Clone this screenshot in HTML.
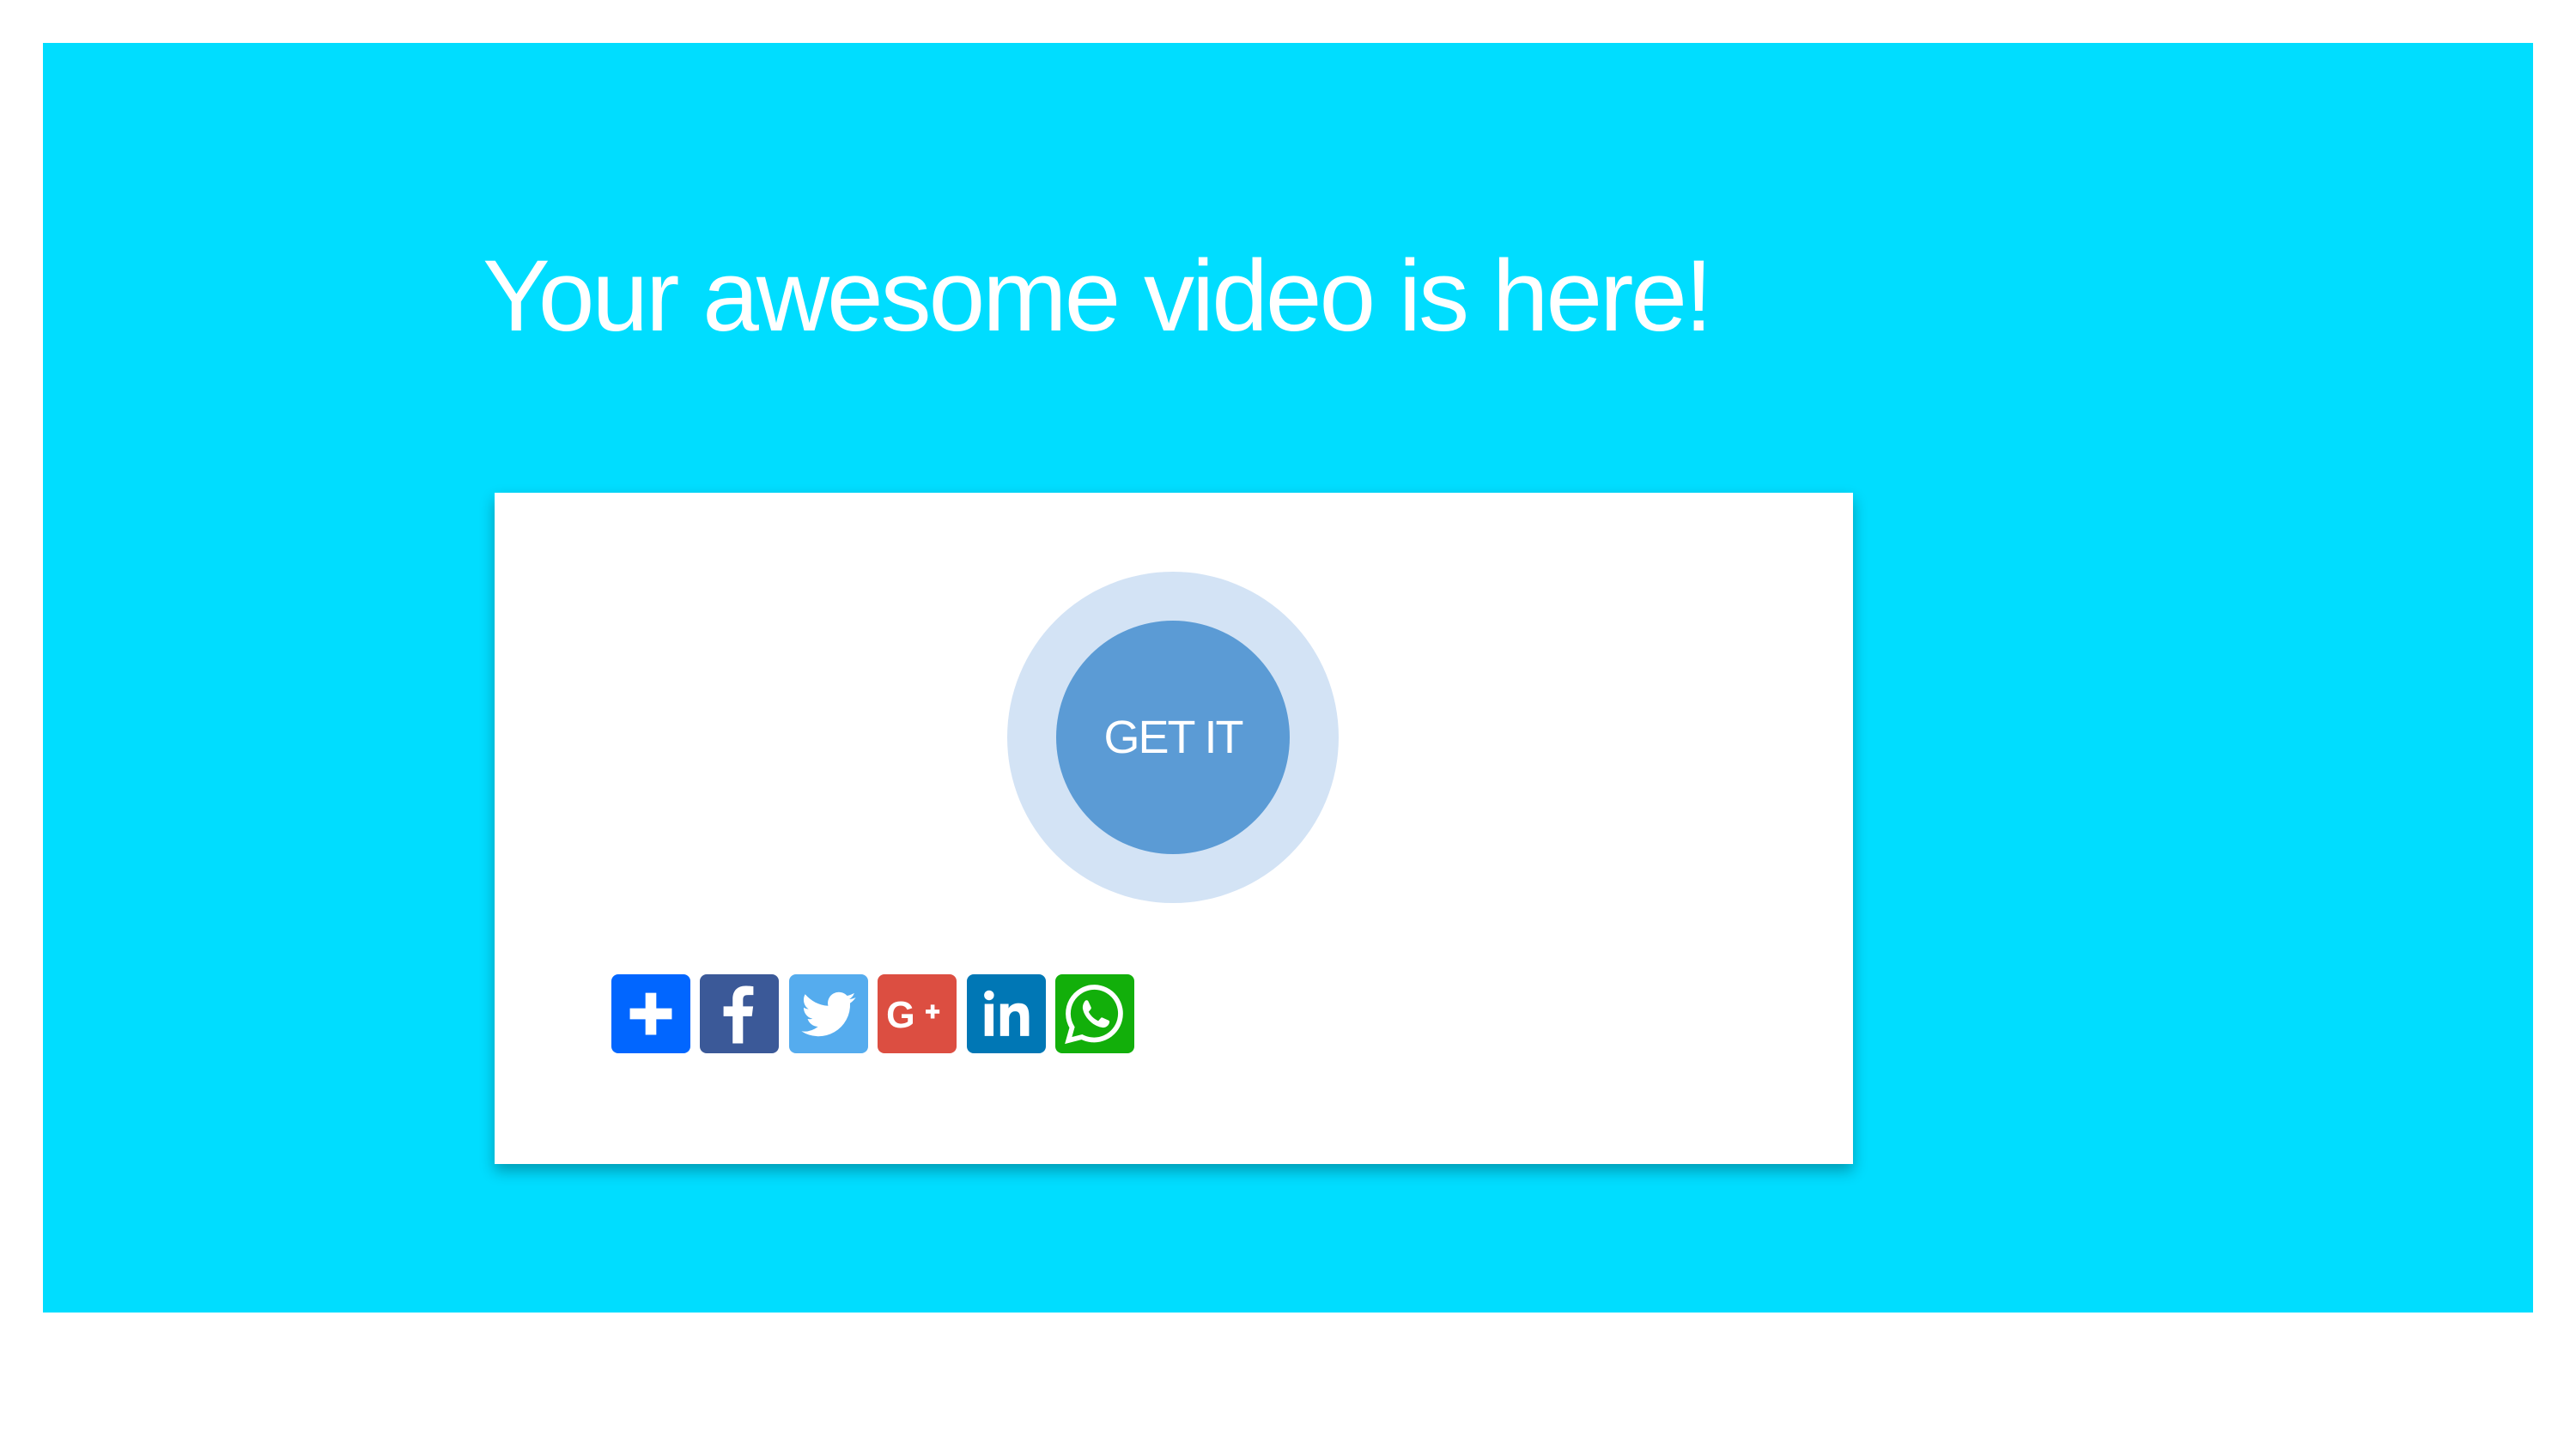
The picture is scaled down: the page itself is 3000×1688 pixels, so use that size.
<!DOCTYPE html>
<html><head><meta charset="utf-8"><style>
html,body{margin:0;padding:0;background:#fff;width:3000px;height:1688px;overflow:hidden}
.bg{position:absolute;left:50px;top:50px;width:2900px;height:1479px;background:#00DDFF}
h1{position:absolute;left:562px;top:286px;margin:0;font:300 118px/1 "Liberation Sans",sans-serif;color:#fff;letter-spacing:-3px;white-space:nowrap}
.card{position:absolute;left:576px;top:574px;width:1582px;height:782px;background:#fff;box-shadow:0 8px 16px rgba(0,0,0,.3)}
.outer{position:absolute;left:1173px;top:666px;width:386px;height:386px;border-radius:50%;background:#D3E3F5}
.inner{position:absolute;left:1230px;top:723px;width:272px;height:272px;border-radius:50%;background:#5B9BD5;color:#fff;font:400 54px/272px "Liberation Sans",sans-serif;text-align:center;letter-spacing:-2px}
.ic{position:absolute;top:1135px;width:92px;height:92px;border-radius:8px}
.ic svg{width:92px;height:92px;display:block}
</style></head><body>
<div class="bg"></div>
<h1>Your awesome video is here!</h1>
<div class="card"></div>
<div class="outer"></div>
<div class="inner">GET IT</div>
<div class="ic" style="left:712px;background:#0166FF"><svg viewBox="0 0 32 32"><path d="M13.8 7.5h4.4v6.3h6.3v4.4h-6.3v6.3h-4.4v-6.3H7.5v-4.4h6.3z" fill="#fff"/></svg></div>
<div class="ic" style="left:815px;background:#3B5998"><svg viewBox="0 0 32 32"><path d="M17.5 28V17h3.6l.5-4h-4.1v-2.6c0-1.2.3-2 2-2h2.2V4.9c-.4 0-1.7-.2-3.2-.2-3.2 0-5.2 1.9-5.2 5.4V13H9.6v4h3.7v11z" fill="#fff"/></svg></div>
<div class="ic" style="left:919px;background:#55ACEE"><svg viewBox="0 0 32 32"><path d="M27 9.4c-.8.4-1.7.6-2.6.7.9-.6 1.6-1.4 2-2.5-.9.5-1.9.9-2.9 1.1a4.5 4.5 0 0 0-7.7 4.1c-3.7-.2-7-2-9.3-4.7-1.2 2.1-.5 4.8 1.4 6-.7 0-1.4-.2-2-.6 0 2.2 1.5 4.1 3.6 4.5-.7.2-1.4.2-2 .1.6 1.8 2.3 3.1 4.2 3.1A9.1 9.1 0 0 1 5 23.1a12.8 12.8 0 0 0 19.7-11.4c.9-.6 1.7-1.4 2.3-2.3z" fill="#fff"/></svg></div>
<div class="ic" style="left:1022px;background:#DC4E41"><svg viewBox="0 0 32 32"><text x="3.5" y="21.5" font-family="Liberation Sans,sans-serif" font-weight="bold" font-size="15" fill="#fff">G</text><path d="M19.5 14.3h2v-2h1.6v2h2v1.6h-2v2h-1.6v-2h-2z" fill="#fff"/></svg></div>
<div class="ic" style="left:1126px;background:#0077B5"><svg viewBox="0 0 32 32"><circle cx="9" cy="8.5" r="2" fill="#fff"/><path d="M7.2 12h3.6v13H7.2zM13.5 12h3.4v1.8c.6-1.1 2-2.1 4-2.1 3.6 0 4.3 2.3 4.3 5.4V25h-3.6v-7c0-1.7-.3-3-2-3s-2.5 1.3-2.5 3v7h-3.6z" fill="#fff"/></svg></div>
<div class="ic" style="left:1229px;background:#12AF0A"><svg viewBox="0 0 32 32"><path d="M16 5.2A10.7 10.7 0 0 0 6.8 21.5L5.3 26.8l5.5-1.4A10.7 10.7 0 1 0 16 5.2z" fill="none" stroke="#fff" stroke-width="2"/><path d="M12.5 10.5c.4 0 .7 0 .9.5l1.1 2.4c.1.3 0 .6-.2.8l-.8 1c.9 1.7 2.2 2.9 3.9 3.7l1-1.1c.2-.3.5-.3.8-.2l2.4 1.1c.4.2.4.5.3.9-.3 1.2-1.4 2-2.6 2-3.8-.4-7.6-4-8.2-7.8-.1-1.4.7-3 1.4-3.3z" fill="#fff"/></svg></div>
</body></html>
